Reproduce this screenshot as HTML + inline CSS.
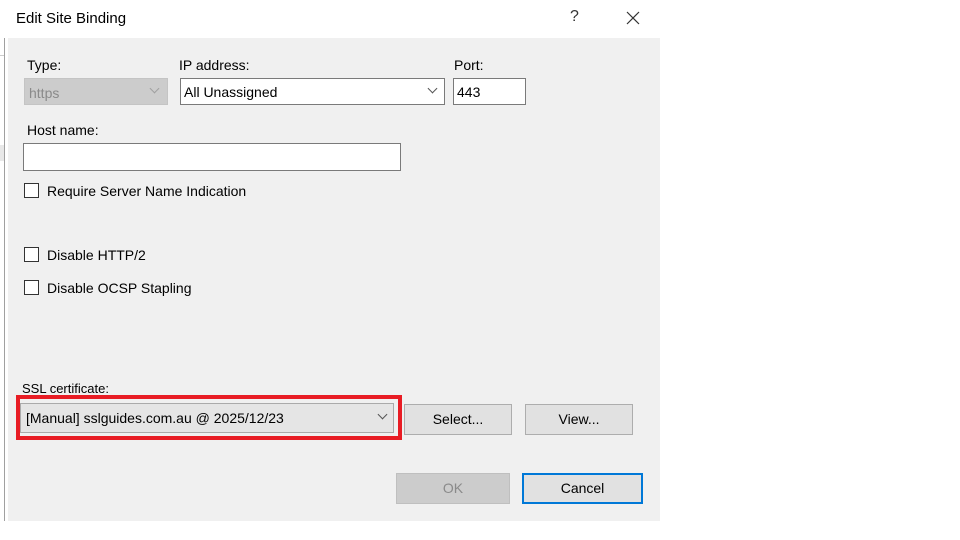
<!DOCTYPE html>
<html><head><meta charset="utf-8"><style>
*{margin:0;padding:0;box-sizing:border-box}
body{width:960px;height:540px;background:#fff;position:relative;overflow:hidden;font-family:"Liberation Sans",sans-serif;font-size:14px;color:#000}
.a{position:absolute}
.body{left:8px;top:38px;width:652px;height:483px;background:#f0f0f0}
.lbl{position:absolute;font-size:14px;line-height:16px}
.box{position:absolute;background:#fff;border:1px solid #7a7a7a}
.cb{position:absolute;width:15px;height:15px;border:1px solid #333;background:#fff}
.btn{position:absolute;background:#e1e1e1;border:1px solid #adadad;text-align:center;font-size:14px}
.chev{position:absolute;width:7px;height:7px;border-right:1.3px solid #555;border-bottom:1.3px solid #555;transform:rotate(45deg)}
</style></head><body>
<div class="a" style="left:4px;top:38px;width:1px;height:483px;background:#a0a0a0"></div>
<div class="a" style="left:0;top:38px;width:4px;height:483px;background:#fff"></div>
<div class="a" style="left:0;top:55px;width:4px;height:1px;background:#ccc"></div>
<div class="a" style="left:0;top:145px;width:4px;height:16px;background:#e8e8e8"></div>
<div class="a body"></div>
<div class="lbl" style="left:16px;top:11px;font-size:15px">Edit Site Binding</div>
<div class="lbl" style="left:570px;top:9px;font-size:16px;color:#333">?</div>
<svg class="a" style="left:626px;top:11px" width="14" height="14"><path d="M1 1L13 13M13 1L1 13" stroke="#333" stroke-width="1.2"/></svg>

<div class="lbl" style="left:27px;top:57px">Type:</div>
<div class="a" style="left:24px;top:78px;width:144px;height:27px;background:#cccccc;border:1px solid #c4c4c4"></div>
<div class="lbl" style="left:29px;top:85px;color:#8a8a8a">https</div>
<div class="chev" style="left:151px;top:85px;border-color:#a0a0a0"></div>

<div class="lbl" style="left:179px;top:57px">IP address:</div>
<div class="box" style="left:180px;top:78px;width:265px;height:27px"></div>
<div class="lbl" style="left:184px;top:84px">All Unassigned</div>
<div class="chev" style="left:429px;top:85px"></div>

<div class="lbl" style="left:454px;top:57px">Port:</div>
<div class="box" style="left:453px;top:78px;width:73px;height:27px"></div>
<div class="lbl" style="left:457px;top:84px">443</div>

<div class="lbl" style="left:27px;top:122px">Host name:</div>
<div class="box" style="left:23px;top:143px;width:378px;height:28px"></div>

<div class="cb" style="left:24px;top:183px"></div>
<div class="lbl" style="left:47px;top:183px">Require Server Name Indication</div>
<div class="cb" style="left:24px;top:247px"></div>
<div class="lbl" style="left:47px;top:247px">Disable HTTP/2</div>
<div class="cb" style="left:24px;top:280px"></div>
<div class="lbl" style="left:47px;top:280px">Disable OCSP Stapling</div>

<div class="lbl" style="left:22px;top:381px;font-size:13px">SSL certificate:</div>
<div class="a" style="left:16px;top:395px;width:386px;height:45px;border:4px solid #e81c24"></div>
<div class="a" style="left:20px;top:403px;width:374px;height:30px;background:#e5e5e5;border:1px solid #aaa"></div>
<div class="lbl" style="left:26px;top:410px">[Manual] sslguides.com.au @ 2025/12/23</div>
<div class="chev" style="left:379px;top:411px"></div>

<div class="btn" style="left:404px;top:404px;width:108px;height:31px;line-height:29px">Select...</div>
<div class="btn" style="left:525px;top:404px;width:108px;height:31px;line-height:29px">View...</div>
<div class="btn" style="left:396px;top:473px;width:114px;height:31px;line-height:29px;background:#cccccc;border-color:#bfbfbf;color:#8a8a8a">OK</div>
<div class="btn" style="left:522px;top:473px;width:121px;height:31px;line-height:27px;border:2px solid #0078d7">Cancel</div>
</body></html>
